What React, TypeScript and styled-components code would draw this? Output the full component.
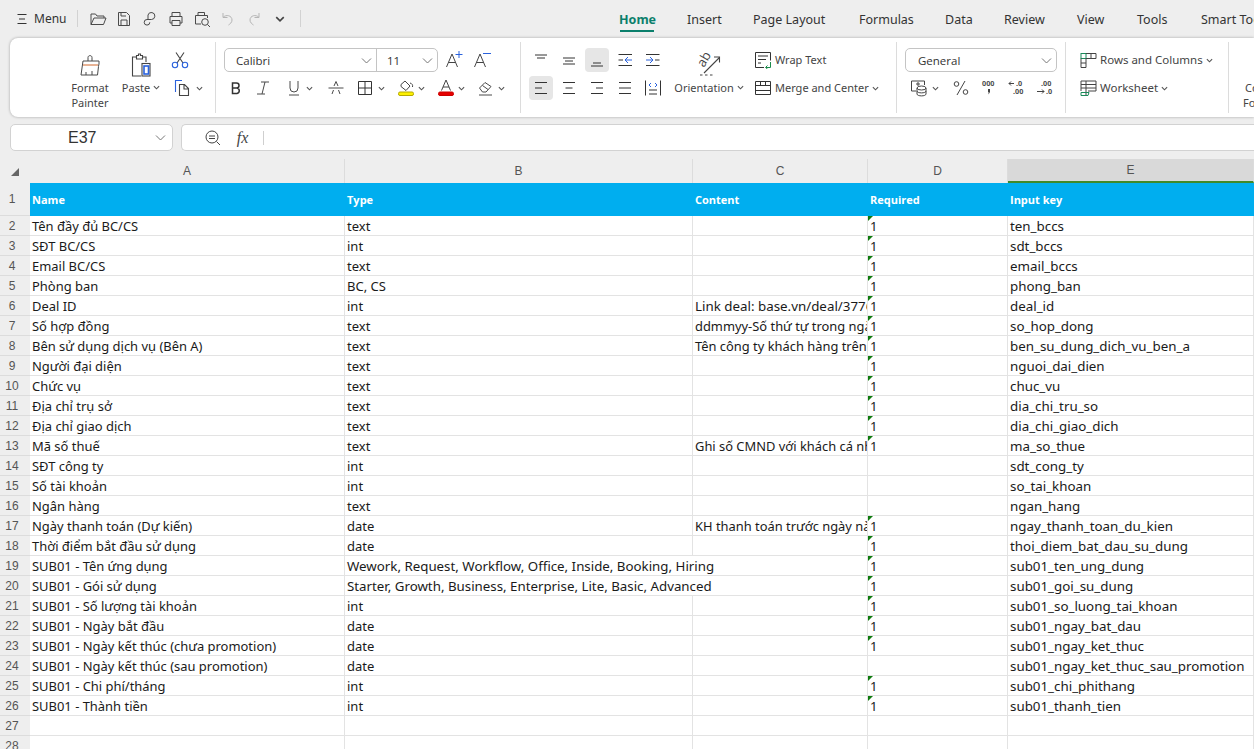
import React from "react";
import styled, { createGlobalStyle } from "styled-components";

const Global = createGlobalStyle`
  html, body { margin: 0; padding: 0; width: 1254px; height: 749px; overflow: hidden; background: #eeeeee; }
  * { box-sizing: border-box; }
  body { font-family: "Open Sans", "Noto Sans", sans-serif; color: #333; }
`;

const uiFont = `"Noto Sans", "Open Sans", sans-serif`;

const Page = styled.div`
  width: 1254px; height: 749px; overflow: hidden; display: flex; flex-direction: column; background: #eee;
`;
const TopBar = styled.div`
  height: 37px; display: flex; align-items: center; padding-left: 15px; flex: none; white-space: nowrap;
`;
const MenuButton = styled.div`
  display: flex; align-items: center; gap: 5px; font: 12px ${uiFont}; color: #333; width: 62px; flex: none;
`;
const VSep = styled.div<{ $h?: number; $c?: string }>`
  width: 1px; height: ${(p) => p.$h ?? 17}px; background: ${(p) => p.$c ?? "#d2d2d2"}; flex: none;
`;
const QuickIcons = styled.div`
  display: flex; align-items: center; gap: 8px; margin-left: 11px; width: 211px; flex: none;
`;
const Tabs = styled.div`
  display: flex; margin-left: 318px; flex: none;
`;
const Tab = styled.div<{ $active?: boolean; $w: number }>`
  width: ${(p) => p.$w}px; font: ${(p) => (p.$active ? 700 : 400)} 12.5px ${uiFont};
  color: ${(p) => (p.$active ? "#0b7f6c" : "#333")}; flex: none; position: relative; height: 37px; line-height: 39px;
  ${(p) => p.$active && `&::after{content:"";position:absolute;left:1px;width:34px;bottom:5px;height:2px;background:#0b7f6c;}`}
`;
const Ribbon = styled.div`
  margin: 1px 0 0 10px; height: 79px; background: #fff; border-radius: 8px 0 0 8px;
  box-shadow: 0 0 3px rgba(0,0,0,.32); display: flex; padding: 4px 0 4px; flex: none;
`;
const Group = styled.div<{ $w: number; $pad?: number }>`
  width: ${(p) => p.$w}px; flex: none; border-right: 1px solid #dcdcdc; padding-left: ${(p) => p.$pad ?? 0}px;
  display: flex; position: relative;
`;
const ClipGroup = styled.div`
  width: 25px; flex: none; position: relative; overflow: hidden;
`;
const BigCol = styled.div<{ $w: number; $ml?: number }>`
  width: ${(p) => p.$w}px; margin-left: ${(p) => p.$ml ?? 0}px; display: flex; flex-direction: column; align-items: center; flex: none;
  font: 11px/15px ${uiFont}; color: #444; text-align: center;
`;
const BigIcon = styled.div<{ $h?: number }>`
  width: 40px; height: ${(p) => p.$h ?? 38}px; padding-bottom: 3px; display: flex; align-items: flex-end; justify-content: center; flex: none;
`;
const DropLabel = styled.span<{ $mt?: number }>`
  display: flex; align-items: center; gap: 3px; white-space: nowrap; margin-top: ${(p) => p.$mt ?? 0}px;
`;
const Rows = styled.div<{ $ml?: number; $gap?: number; $w?: number }>`
  display: flex; flex-direction: column; gap: ${(p) => p.$gap ?? 4}px; margin-left: ${(p) => p.$ml ?? 0}px; padding-top: 6px;
  ${(p) => p.$w && `width:${p.$w}px;`}
`;
const Line = styled.div<{ $gap?: number; $size?: number }>`
  display: flex; align-items: center; height: 24px; gap: ${(p) => p.$gap ?? 0}px;
  font: ${(p) => p.$size ?? 11}px ${uiFont}; color: #444; white-space: nowrap;
`;
const LineText = styled.span`
  position: relative; top: -1px;
`;
const IconBox = styled.div<{ $w?: number; $on?: boolean; $ml?: number }>`
  width: ${(p) => p.$w ?? 24}px; height: 24px; display: flex; align-items: center; justify-content: center; flex: none;
  border-radius: 4px; background: ${(p) => (p.$on ? "#e6e6e6" : "transparent")};
  margin-left: ${(p) => p.$ml ?? 0}px;
`;
const Combo = styled.div<{ $w: number }>`
  width: ${(p) => p.$w}px; height: 24px; border: 1px solid #c4c4c4; border-radius: 5px; display: flex; align-items: center;
  justify-content: space-between; padding: 0 4px 0 12px; font: 11.5px "Open Sans", sans-serif; color: #333; flex: none;
`;
const ComboPair = styled.div`
  display: flex; width: 214px; height: 24px; border: 1px solid #c4c4c4; border-radius: 5px; flex: none;
`;
const ComboPart = styled.div<{ $w: number; $pl: number; $div?: boolean }>`
  width: ${(p) => p.$w}px; padding-left: ${(p) => p.$pl}px; display: flex; align-items: center; justify-content: space-between;
  padding-right: 4px; font: 11.5px "Open Sans", sans-serif; color: #333; ${(p) => p.$div && "border-right: 1px solid #c4c4c4;"}
`;
const ClippedLabel = styled.div`
  position: absolute; left: 14px; top: 38px; font: 11px/15px ${uiFont}; color: #444; white-space: nowrap; text-indent: 2px;
`;

const FormulaRow = styled.div`
  margin: 7px 0 0 10px; display: flex; gap: 8px; height: 27px; flex: none;
`;
const NameBox = styled.div`
  width: 163px; background: #fff; border: 1px solid #d2d2d2; border-radius: 5px; display: flex; align-items: center;
  justify-content: space-between; padding: 0 6px 0 57px;
  font: 16px "Liberation Sans", sans-serif; color: #333;
`;
const FormulaBox = styled.div`
  flex: 1; background: #fff; border: 1px solid #d2d2d2; border-right: 0; border-radius: 5px 0 0 5px; display: flex; align-items: center; padding-left: 22px; gap: 11px;
`;
const Fx = styled.span`
  font: italic 16px "Liberation Serif", serif; color: #444; width: 19px; text-align: center;
`;

const Sheet = styled.div`
  margin-top: 8px; flex: 1; display: grid; overflow: hidden; background: #fff;
  grid-template-columns: 30px 315px 348px 175px 140px 246px;
  grid-template-rows: 24px 33px repeat(28, 20px);
  align-content: start;
`;
const Corner = styled.div`
  background: #eee; position: relative;
  &::after { content: ""; position: absolute; right: 11px; bottom: 7px; border-style: solid; border-width: 0 0 8px 8px; border-color: transparent transparent #666 transparent; }
`;
const ColHead = styled.div<{ $sel?: boolean }>`
  background: ${(p) => (p.$sel ? "#d9d9d9" : "#eee")};
  border-right: 1px solid #dcdcdc;
  ${(p) => p.$sel && "border-bottom: 2px solid #3f8a2a;"}
  display: flex; align-items: center; justify-content: center; font: 12px "Liberation Sans", sans-serif; color: #555;
`;
const RowHead = styled.div`
  background: #eee; border-bottom: 1px solid #dcdcdc; display: flex; align-items: center; justify-content: center;
  font: 12px "Liberation Sans", sans-serif; color: #555; padding-right: 6px;
`;
const HeadCell = styled.div`
  background: #00aeef; color: #fff; font: 700 11px "Open Sans", sans-serif; padding-left: 2px; display: flex; align-items: center;
`;
const Cell = styled.div<{ $span?: number; $flag?: boolean; $size?: number }>`
  border-right: 1px solid #e3e3e3; border-bottom: 1px solid #e3e3e3;
  font: ${(p) => p.$size ?? 13.35}px/21px "Noto Sans", "Open Sans", sans-serif; color: #1a1a1a; padding-left: 2px; white-space: nowrap; overflow: hidden;
  position: relative;
  ${(p) => p.$span && `grid-column: span ${p.$span};`}
  ${(p) => p.$flag && `&::before{content:"";position:absolute;left:0;top:0;border-style:solid;border-width:5px 5px 0 0;border-color:#0f7b0f transparent transparent transparent;}`}
`;

const S = (p: React.SVGProps<SVGSVGElement>) => (
  <svg width={18} height={18} viewBox="0 0 18 18" fill="none" stroke="#4a4a4a" strokeWidth={1} {...p} />
);
const ChevSvg = styled.svg`
  flex: none;
`;
const Chev = ({ s = 7, c = "#555" }: { s?: number; c?: string }) => (
  <ChevSvg width={s} height={s} viewBox="0 0 8 8" fill="none" stroke={c} strokeWidth={1.3}>
    <path d="M1 2.5 4 5.5 7 2.5" />
  </ChevSvg>
);
const ChevL = () => (
  <ChevSvg width={11} height={11} viewBox="0 0 11 11" fill="none" stroke="#777" strokeWidth={1}>
    <path d="M1 3.5 5.5 8 10 3.5" />
  </ChevSvg>
);

const Burger = () => <S width={14} height={14} viewBox="0 0 14 14" stroke="#333"><path d="M2.5 2.5h9M4 7h6M2.500 11.500h9" /></S>;
const Open = () => <S><path d="M2 14.5V4h4.5l1.5 2h7v2M2 14.5h12.5L17 8H5z" /></S>;
const Save = () => <S><path d="M3.5 2.5h8l3 3v10h-11zM6 2.5V6h5M6 15.5V10h6v5.5" /></S>;
const Share = () => <S><path d="M7 9.500V5a3.500 3.500 0 1 1 3.500 4.500H6a2.800 2.800 0 1 0 2.800 2.800" /></S>;
const Print = () => <S><path d="M5 6V2.500h8V6M3 13V6.500h12V13h-2M5 13H3M5 10.500h8v5H5z" /></S>;
const Preview = () => <S><path d="M5 5V2.500h6.500V5M8 14H2.500V5.500h12V8" /><circle cx="12" cy="12" r="3.300" /><path d="m14.500 14.500 2.500 2.500" /></S>;
const Undo = ({ c = "#b5b5b5" }: { c?: string }) => (
  <S stroke={c}><path d="M4 3v4.500h4.500M4 7.500c3-3.500 9-2 9 2.500 0 2.500-2 4-3.500 5" /></S>
);
const Redo = ({ c = "#b5b5b5" }: { c?: string }) => (
  <S stroke={c}><path d="M14 3v4.500H9.500M14 7.500c-3-3.500-9-2-9 2.500 0 2.500 2 4 3.500 5" /></S>
);

const Painter = () => (
  <svg width={24} height={24} viewBox="0 0 24 24" fill="none" stroke="#4a4a4a" strokeWidth={1}>
    <path d="M10 8V4.500c0-2.500 4-2.500 4 0V8" /><path d="M5 8h16v3l-.6 2.500M5 8l-2 14h16.500l1-8.500" /><path d="M5 12h15" stroke="#d0672a" /><path d="M8 22v-3M14 22v-4" />
  </svg>
);
const PasteI = () => (
  <svg width={24} height={24} viewBox="0 0 24 24" fill="none" stroke="#444" strokeWidth={1.1}>
    <path d="M8 4H3.500v19H12M17 9V4h-4" /><path d="M7.500 6V2.500h2V1h2v1.500h2V6z" /><rect x="13" y="10.500" width="8" height="12.500" /><rect x="15" y="13" width="4.500" height="8" fill="#fff" stroke="#2a62dd" strokeWidth={1.6} />
  </svg>
);
const Scissors = () => (
  <svg width={18} height={18} viewBox="0 0 18 18" fill="none" strokeWidth={1.1}>
    <path d="M5 1.500 12 12M13 1.500 6 12" stroke="#444" /><circle cx="4" cy="14" r="2.700" stroke="#2a62dd" /><circle cx="14" cy="14" r="2.700" stroke="#2a62dd" />
  </svg>
);
const CopyI = () => (
  <svg width={18} height={18} viewBox="0 0 18 18" fill="none" strokeWidth={1.1}>
    <path d="M9 1.500H2.500V13" stroke="#2a62dd" /><path d="M6.500 5.500h5l4 4v7h-9zM11 5.500V10h4.500" stroke="#444" />
  </svg>
);
const GrowA = ({ minus }: { minus?: boolean }) => (
  <svg width={19} height={18} viewBox="0 0 19 18" fill="none" stroke="#444" strokeWidth={1}>
    <path d="M1.500 16 7 3l5.500 13M3.500 11.500h7" />
    <path d={minus ? "M10 2.500h8" : "M10.500 3.500h7M14 0v7"} stroke="#2a62dd" />
  </svg>
);
const Bold = () => <S strokeWidth={1.5} stroke="#333"><path d="M5.500 4h4a2.500 2.500 0 0 1 0 5h-4zM5.500 9h4.500a2.800 2.800 0 0 1 0 5.500H5.500z" /></S>;
const Italic = () => <S><path d="M7 3h8M11 3 8 15M3 15h8" /></S>;
const Under = () => <S><path d="M4 16h10M5 2v7a4 4 0 0 0 8 0V2" /></S>;
const Strike = () => <S><path d="M1.500 9h15M5 15l1.500-4M11.500 11l1.500 4M7 7l2-4.500L11 7" /></S>;
const Borders = () => <S stroke="#333"><path d="M2.500 2.500h13v13h-13zM9 2.500v13M2.500 9h13" /></S>;
const Fill = () => (
  <svg width={18} height={18} viewBox="0 0 18 18" fill="none" stroke="#444">
    <path d="M4 5.500 8 2l5 5-4 4.500-5-4zM13 4c2 .5 3 2 2.500 4" /><rect x="1.500" y="13" width="15" height="3.500" rx="1.500" fill="#fdf000" stroke="#b6a900" />
  </svg>
);
const FontColor = () => (
  <svg width={18} height={18} viewBox="0 0 18 18" fill="none" stroke="#444">
    <path d="M4.500 11.500 9 1l4.500 10.500M6 8h6" /><rect x="1.500" y="13" width="15" height="3.500" rx="1.500" fill="#e60000" stroke="#c00" />
  </svg>
);
const Eraser = () => <S><path d="M2.500 9 8 3.500l6 4L9 13H5.500zM5.500 6.500l5.500 4M2 16h13" /></S>;
const AlignL = ({ d }: { d: string }) => <S stroke="#333"><path d={d} /></S>;
const Indent = () => (
  <S stroke="#333"><path d="M2 3.500h13.500M2 14.500h13.500M11 9h4.500" /><path d="M2 9h6M6 6l3 3-3 3" stroke="#2a62dd" /></S>
);
const Outdent = () => (
  <S stroke="#333"><path d="M2.500 3.500H16M2.500 14.500H16M2.500 9H7" /><path d="M16 9h-6M12 6 9 9l3 3" stroke="#2a62dd" /></S>
);
const Distrib = () => <S stroke="#333"><path d="M1.500 1.500v15M16.500 1.500v15M5 11h8M5 15h8" /><path d="M7 4 5 6l2 2M11 4l2 2-2 2" stroke="#2a62dd" /></S>;
const OrientText = styled.text`
  font: 13px "Open Sans", sans-serif; fill: #444; stroke: none;
`;
const OrientI = () => (
  <svg width={24} height={24} viewBox="0 0 24 24" fill="none" stroke="#444" strokeWidth={1.1}>
    <OrientText transform="translate(7 16) rotate(-60)">ab</OrientText>
    <path d="M7 21 22 6M17 5h5.500v5.500" /><path d="M3 23h2.500M8 23h2.500M13 23h2.500" />
  </svg>
);
const WrapI = () => (
  <svg width={18} height={18} viewBox="0 0 18 18" fill="none" stroke="#333">
    <path d="M1.500 1.500h15v8M10 16.500H1.500v-15M4 5h10M4 8.500h8M4 12h3" /><path d="M16.500 11v5.500H12m1.500-2-2 2 2 1.500" stroke="#1a8a4a" />
  </svg>
);
const MergeI = () => (
  <svg width={18} height={16} viewBox="0 0 18 16" fill="none" stroke="#333"><path d="M1.500 1.500h15v13h-15zM1.500 5.500h15M1.500 10.500h15M6.500 1.500v4M11.500 1.500v4" /></svg>
);
const NumFmt = () => (
  <svg width={18} height={18} viewBox="0 0 18 18" fill="none" stroke="#444">
    <path d="M6 12H1.500V2h13v4M6 5h4M8 3v4" /><ellipse cx="11.500" cy="9" rx="4.500" ry="2" /><path d="M7 9v6c0 2.500 9 2.500 9 0V9M7 12c0 2.500 9 2.500 9 0" />
  </svg>
);
const Percent = () => <S stroke="#444"><path d="M13 2 5 16" /><circle cx="4.500" cy="5" r="2.300" /><circle cx="13.500" cy="13" r="2.300" /></S>;
const TinyNum = styled.svg`
  font: 700 7.5px "Liberation Sans", sans-serif; fill: #444; flex: none;
`;
const Thousands = () => (
  <TinyNum width={18} height={18} viewBox="0 0 18 18"><text x="2" y="7">000</text><path d="M8 10h2v3l-1.500 2.500L8.500 13H8z" fill="#444" /></TinyNum>
);
const DecInc = () => (
  <TinyNum width={18} height={18} viewBox="0 0 18 18"><text x="8" y="7">.0</text><text x="5" y="15">.00</text><path d="M6 4.500H1M3 2.500l-2 2 2 2" fill="none" stroke="#444" /></TinyNum>
);
const DecDec = () => (
  <TinyNum width={18} height={18} viewBox="0 0 18 18"><text x="5" y="7">.00</text><text x="10" y="15">.0</text><path d="M1 12.500h7M6 10.500l2 2-2 2" fill="none" stroke="#444" /></TinyNum>
);
const RowsI = () => (
  <svg width={17} height={17} viewBox="0 0 17 17" fill="none" stroke="#444">
    <rect x="1" y="1.500" width="5" height="5" stroke="#1a8a5a" /><path d="M6 1.500h10v5H6M11 1.500v5M1 6.500v9h5v-9M1 11h5" />
  </svg>
);
const SheetI = () => (
  <svg width={17} height={17} viewBox="0 0 17 17" fill="none" stroke="#444">
    <path d="M1 11V1h15v10H8M1 4.500h15M6 1v15M1 8h15" /><path d="M1 12.500h8l-1 3H1z" stroke="#1a8a5a" />
  </svg>
);
const ZoomI = () => <S stroke="#444"><circle cx="8" cy="8" r="6" /><path d="M5 7h6M5 9.500h6M12.500 12.500l3.500 3.500" /></S>;

const tabs: [string, number, boolean?][] = [
  ["Home", 68, true], ["Insert", 66], ["Page Layout", 106], ["Formulas", 86], ["Data", 59], ["Review", 73], ["View", 60], ["Tools", 64], ["Smart Tools", 90],
];

const data: [string, string, string, string, string, number?][] = [
  ["Tên đầy đủ BC/CS", "text", "", "1", "ten_bccs"],
  ["SĐT BC/CS", "int", "", "1", "sdt_bccs"],
  ["Email BC/CS", "text", "", "1", "email_bccs"],
  ["Phòng ban", "BC, CS", "", "1", "phong_ban"],
  ["Deal ID", "int", "Link deal: base.vn/deal/3776/detail", "1", "deal_id"],
  ["Số hợp đồng", "text", "ddmmyy-Số thứ tự trong ngày", "1", "so_hop_dong"],
  ["Bên sử dụng dịch vụ (Bên A)", "text", "Tên công ty khách hàng trên GPKD", "1", "ben_su_dung_dich_vu_ben_a"],
  ["Người đại diện", "text", "", "1", "nguoi_dai_dien"],
  ["Chức vụ", "text", "", "1", "chuc_vu"],
  ["Địa chỉ trụ sở", "text", "", "1", "dia_chi_tru_so"],
  ["Địa chỉ giao dịch", "text", "", "1", "dia_chi_giao_dich"],
  ["Mã số thuế", "text", "Ghi số CMND với khách cá nhân", "1", "ma_so_thue"],
  ["SĐT công ty", "int", "", "", "sdt_cong_ty"],
  ["Số tài khoản", "int", "", "", "so_tai_khoan"],
  ["Ngân hàng", "text", "", "", "ngan_hang"],
  ["Ngày thanh toán (Dự kiến)", "date", "KH thanh toán trước ngày nào", "1", "ngay_thanh_toan_du_kien"],
  ["Thời điểm bắt đầu sử dụng", "date", "", "1", "thoi_diem_bat_dau_su_dung"],
  ["SUB01 - Tên ứng dụng", "Wework, Request, Workflow, Office, Inside, Booking, Hiring", "", "1", "sub01_ten_ung_dung", 2],
  ["SUB01 - Gói sử dụng", "Starter, Growth, Business, Enterprise, Lite, Basic, Advanced", "", "1", "sub01_goi_su_dung", 2],
  ["SUB01 - Số lượng tài khoản", "int", "", "1", "sub01_so_luong_tai_khoan"],
  ["SUB01 - Ngày bắt đầu", "date", "", "1", "sub01_ngay_bat_dau"],
  ["SUB01 - Ngày kết thúc (chưa promotion)", "date", "", "1", "sub01_ngay_ket_thuc"],
  ["SUB01 - Ngày kết thúc (sau promotion)", "date", "", "", "sub01_ngay_ket_thuc_sau_promotion"],
  ["SUB01 - Chi phí/tháng", "int", "", "1", "sub01_chi_phithang"],
  ["SUB01 - Thành tiền", "int", "", "1", "sub01_thanh_tien"],
];

export default function App() {
  return (
    <Page>
      <Global />
      <TopBar>
        <MenuButton><Burger />Menu</MenuButton>
        <VSep />
        <QuickIcons>
          <Open /><Save /><Share /><Print /><Preview /><Undo /><Redo />
          <IconBox $w={18}><Chev s={10} c="#444" /></IconBox>
        </QuickIcons>
        <VSep />
        <Tabs>
          {tabs.map(([t, w, a]) => <Tab key={t} $w={w} $active={a}>{t}</Tab>)}
        </Tabs>
      </TopBar>
      <Ribbon>
        <Group $w={206}>
          <BigCol $w={60} $ml={50}><BigIcon><Painter /></BigIcon><span>Format<br />Painter</span></BigCol>
          <BigCol $w={42}><BigIcon><PasteI /></BigIcon><DropLabel>Paste<Chev /></DropLabel></BigCol>
          <Rows $ml={8}>
            <Line><IconBox $w={20}><Scissors /></IconBox></Line>
            <Line $gap={4}><IconBox $w={20} $ml={2}><CopyI /></IconBox><Chev /></Line>
          </Rows>
        </Group>
        <Group $w={305} $pad={8}>
          <Rows>
            <Line $gap={7}>
              <ComboPair>
                <ComboPart $w={152} $pl={11} $div>Calibri<ChevL /></ComboPart>
                <ComboPart $w={60} $pl={10}>11<ChevL /></ComboPart>
              </ComboPair>
              <IconBox $w={19}><GrowA /></IconBox>
              <IconBox $w={19} $ml={2}><GrowA minus /></IconBox>
            </Line>
            <Line>
              <IconBox $w={24}><Bold /></IconBox>
              <IconBox $w={30}><Italic /></IconBox>
              <IconBox $w={24} $ml={4}><Under /></IconBox><Chev />
              <IconBox $w={30} $ml={8}><Strike /></IconBox>
              <IconBox $w={22} $ml={3}><Borders /></IconBox><IconBox $w={9} $ml={1}><Chev /></IconBox>
              <IconBox $w={24} $ml={8}><Fill /></IconBox><Chev />
              <IconBox $w={24} $ml={9}><FontColor /></IconBox><Chev />
              <IconBox $w={24} $ml={9}><Eraser /></IconBox><Chev />
            </Line>
          </Rows>
        </Group>
        <Group $w={376} $pad={8}>
          <Rows $w={140}>
            <Line $gap={4}>
              <IconBox><AlignL d="M3 4h12M5 7h8" /></IconBox>
              <IconBox><AlignL d="M3 7h12M5 10h8M3 13h12" /></IconBox>
              <IconBox $on><AlignL d="M5 12h8M3 15h12" /></IconBox>
              <IconBox><Outdent /></IconBox>
              <IconBox><Indent /></IconBox>
            </Line>
            <Line $gap={4}>
              <IconBox $on><AlignL d="M3 3.500h12M3 9h7M3 14.500h12" /></IconBox>
              <IconBox><AlignL d="M3 3.500h12M5.500 9h7M3 14.500h12" /></IconBox>
              <IconBox><AlignL d="M3 3.500h12M8 9h7M3 14.500h12" /></IconBox>
              <IconBox><AlignL d="M3 3.500h12M3 9h12M3 14.500h12" /></IconBox>
              <IconBox><Distrib /></IconBox>
            </Line>
          </Rows>
          <BigCol $w={78} $ml={1}>
            <BigIcon $h={37}><OrientI /></BigIcon>
            <DropLabel $mt={1}>Orientation<Chev /></DropLabel>
          </BigCol>
          <Rows $ml={6}>
            <Line $gap={3}><WrapI /><LineText>Wrap Text</LineText></Line>
            <Line $gap={3}><MergeI /><LineText>Merge and Center</LineText><Chev /></Line>
          </Rows>
        </Group>
        <Group $w={169} $pad={8}>
          <Rows>
            <Line><Combo $w={152}>General<ChevL /></Combo></Line>
            <Line>
              <IconBox $w={20} $ml={4}><NumFmt /></IconBox>
              <IconBox $w={12}><Chev /></IconBox>
              <IconBox $w={20} $ml={10}><Percent /></IconBox>
              <IconBox $w={20} $ml={8}><Thousands /></IconBox>
              <IconBox $w={20} $ml={8}><DecInc /></IconBox>
              <IconBox $w={20} $ml={8}><DecDec /></IconBox>
            </Line>
          </Rows>
        </Group>
        <Group $w={163} $pad={14}>
          <Rows>
            <Line $gap={3} $size={11.5}><RowsI /><LineText>Rows and Columns</LineText><Chev /></Line>
            <Line $gap={3} $size={11.5}><SheetI /><LineText>Worksheet</LineText><Chev /></Line>
          </Rows>
        </Group>
        <ClipGroup><ClippedLabel>Conditional<br />Formatting</ClippedLabel></ClipGroup>
      </Ribbon>
      <FormulaRow>
        <NameBox>E37<ChevL /></NameBox>
        <FormulaBox><ZoomI /><Fx>fx</Fx><VSep $h={14} $c="#cfcfcf" /></FormulaBox>
      </FormulaRow>
      <Sheet>
        <Corner />
        {["A", "B", "C", "D", "E"].map((c) => <ColHead key={c} $sel={c === "E"}>{c}</ColHead>)}
        <RowHead>1</RowHead>
        {["Name", "Type", "Content", "Required", "Input key"].map((h) => <HeadCell key={h}>{h}</HeadCell>)}
        {data.map((r, i) => (
          <React.Fragment key={i}>
            <RowHead>{i + 2}</RowHead>
            <Cell $size={12.95}>{r[0]}</Cell>
            <Cell $span={r[5]} $size={r[5] ? 13.3 : 13}>{r[1]}</Cell>
            {!r[5] && <Cell $size={i === 4 ? 13.35 : 12.9}>{r[2]}</Cell>}
            <Cell $flag={!!r[3]} $size={13}>{r[3]}</Cell>
            <Cell>{r[4]}</Cell>
          </React.Fragment>
        ))}
        {[27, 28].map((n) => (
          <React.Fragment key={n}>
            <RowHead>{n}</RowHead>
            <Cell /><Cell /><Cell /><Cell /><Cell />
          </React.Fragment>
        ))}
      </Sheet>
    </Page>
  );
}
